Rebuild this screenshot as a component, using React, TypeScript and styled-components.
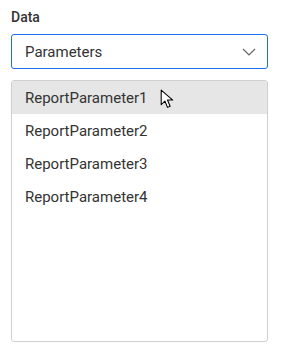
import React from "react";
import styled, { createGlobalStyle } from "styled-components";

const Global = createGlobalStyle`
  html, body { margin: 0; padding: 0; background: #fff; }
  body { font-family: Roboto, "Noto Sans", sans-serif; color: #333; }
`;

const Panel = styled.div`
  width: 281px;
  height: 355px;
  box-sizing: border-box;
  padding: 7px 13px 13px 11px;
  display: flex;
  flex-direction: column;
`;

const Label = styled.div`
  font-size: 14px;
  font-weight: 500;
  line-height: 20px;
  color: #333;
  margin-bottom: 7px;
`;

const Select = styled.div`
  height: 35px;
  box-sizing: border-box;
  border: 1px solid #1a6ef2;
  border-radius: 3px;
  display: flex;
  align-items: center;
  justify-content: space-between;
  padding: 0 11px 0 13px;
  font-size: 15px;
  color: #333;
`;

const List = styled.div`
  margin-top: 11px;
  flex: 1;
  border: 1px solid #cfcfcf;
  border-radius: 3px;
  display: flex;
  flex-direction: column;
  overflow: hidden;
`;

const Item = styled.div<{ $active?: boolean }>`
  position: relative;
  height: 33px;
  display: flex;
  align-items: center;
  padding-left: 13px;
  font-size: 15px;
  color: #333;
  background: ${(p) => (p.$active ? "#e6e6e6" : "transparent")};
`;

const Cursor = styled.svg`
  position: absolute;
  left: 148px;
  top: 8px;
`;

const items = ["ReportParameter1", "ReportParameter2", "ReportParameter3", "ReportParameter4"];

export default function App() {
  return (
    <>
      <Global />
      <Panel>
        <Label>Data</Label>
        <Select>
          <span>Parameters</span>
          <svg width="14" height="8" viewBox="0 0 14 8">
            <path d="M1 1 L7 7 L13 1" fill="none" stroke="#666" strokeWidth="1.2" />
          </svg>
        </Select>
        <List>
          {items.map((t, i) => (
            <Item key={t} $active={i === 0}>
              {t}
              {i === 0 && (
                <Cursor width="15" height="21" viewBox="0 0 14 20">
                  <path
                    d="M1 1 L1 15 L4.5 11.5 L7 17.5 L9.5 16.5 L7 10.5 L12 10.5 Z"
                    fill="#fff"
                    stroke="#000"
                    strokeWidth="1"
                    strokeLinejoin="round"
                  />
                </Cursor>
              )}
            </Item>
          ))}
        </List>
      </Panel>
    </>
  );
}
